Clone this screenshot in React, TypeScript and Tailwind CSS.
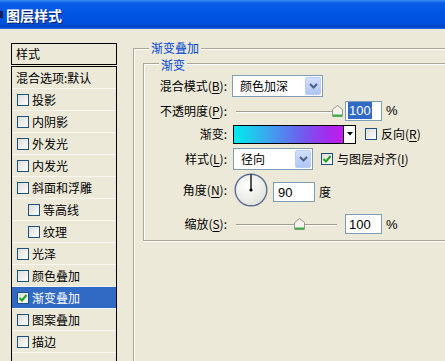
import React from "react";

function Chevron() {
  return (
    <svg width="9" height="6" viewBox="0 0 9 6">
      <path d="M1 1 L4.5 4.5 L8 1" fill="none" stroke="#4D6185" strokeWidth="2" />
    </svg>
  );
}

function Select({ w, text }: { w: string; text: string }) {
  return (
    <div className={`${w} flex h-[22px] items-center border border-[#7F9DB9] bg-white`}>
      <span className="flex-1 pl-[7px] text-[12px] leading-none text-black">{text}</span>
      <span className="mr-[1px] flex h-[18px] w-[16px] items-center justify-center rounded-[2px] border border-[#B9CDF8] bg-linear-to-b from-[#D2DFFD] to-[#B0C5F4]">
        <Chevron />
      </span>
    </div>
  );
}

function Cb({ checked }: { checked?: boolean }) {
  return (
    <span className="relative inline-flex h-[12px] w-[12px] shrink-0 items-center justify-center border border-[#1C5180] bg-linear-to-br from-[#DCDCD7] to-white">
      {checked && (
        <svg width="10" height="10" viewBox="0 0 10 10">
          <path d="M1.5 5 L4 7.5 L8.5 2" fill="none" stroke="#21A121" strokeWidth="2" />
        </svg>
      )}
    </span>
  );
}

function U({ c }: { c: string }) {
  return <span className="underline underline-offset-2">{c}</span>;
}

function Thumb() {
  return (
    <svg width="11" height="12" viewBox="0 0 11 12">
      <path d="M0.5 4.5 L5.5 0.5 L10.5 4.5 V11.5 H0.5Z" fill="#F4F3EE" stroke="#9A9A8A" />
      <rect x="1" y="9.5" width="9" height="2" fill="#38B040" />
    </svg>
  );
}

function Slider({ pos }: { pos: string }) {
  return (
    <div className="relative h-[12px] w-[108px]">
      <div className="absolute left-[3px] top-[6px] h-[2px] w-[101px] border-t border-[#9D9D92] bg-white" />
      <div className={`absolute top-0 ${pos}`}>
        <Thumb />
      </div>
    </div>
  );
}

function Input({ w, h, children }: { w: string; h: string; children: React.ReactNode }) {
  return (
    <div className={`${w} ${h} flex items-center border border-[#7F9DB9] bg-white pl-[2px] font-['Liberation_Sans',sans-serif] text-[13px] leading-none text-black`}>
      {children}
    </div>
  );
}

const items: { t: string; indent?: boolean; sel?: boolean }[] = [
  { t: "投影" },
  { t: "内阴影" },
  { t: "外发光" },
  { t: "内发光" },
  { t: "斜面和浮雕" },
  { t: "等高线", indent: true },
  { t: "纹理", indent: true },
  { t: "光泽" },
  { t: "颜色叠加" },
  { t: "渐变叠加", sel: true },
  { t: "图案叠加" },
  { t: "描边" },
];

function Label({ children }: { children: React.ReactNode }) {
  return <div className="w-[84px] shrink-0 pr-[1px] text-right text-[12px] leading-none text-black">{children}</div>;
}

export default function App() {
  return (
    <div className="h-[361px] w-[445px] overflow-hidden bg-[#ECE9D8] font-['Noto_Sans_CJK_SC','Liberation_Sans',sans-serif] text-black">
      {/* title bar */}
      <div className="flex h-[29px] items-center bg-[linear-gradient(to_bottom,#3D8DF6_0%,#0A5FE8_10%,#0054E3_45%,#0050DC_80%,#0042C4_93%,#2A6FE8_100%)]">
        <span className="h-[7px] w-[3px] bg-[#10205a]" />
        <span className="ml-[3px] text-[14px] font-bold leading-none text-white [text-shadow:1px_1px_0_#0A1E6A]">图层样式</span>
      </div>

      <div className="flex">
        {/* left list */}
        <div className="ml-[11px] mt-[14px] w-[106px] shrink-0">
          <div className="flex h-[22px] items-center border border-black pl-[4px] text-[12px] leading-none">样式</div>
          <div className="mt-[1px] border-x border-t border-black">
            <div className="flex h-[22px] items-center border-b border-[#F8F7F1] pl-[4px] text-[12px] leading-none">混合选项:默认</div>
            {items.map((it) => (
              <div
                key={it.t}
                className={`flex h-[22px] items-center gap-[3px] border-b border-[#F8F7F1] text-[12px] leading-none ${it.indent ? "pl-[16px]" : "pl-[5px]"} ${it.sel ? "bg-[#316AC5] text-white" : ""}`}
              >
                <Cb checked={it.sel} />
                <span>{it.t}</span>
              </div>
            ))}
            <div className="h-[22px] border-b border-[#F8F7F1]" />
          </div>
        </div>

        {/* right */}
        <div className="relative ml-[16px] mt-[19px] h-[400px] w-[340px] shrink-0 border-l border-t border-[#ACA899] shadow-[inset_1px_1px_0_#fff]">
          <span className="absolute -top-[8px] left-[15px] bg-[#ECE9D8] px-[2px] text-[12px] leading-[13px] text-[#0046D5]">渐变叠加</span>

          <div className="relative ml-[9px] mt-[14px] h-[178px] w-[320px] border-l border-t border-b border-[#ACA899] shadow-[inset_1px_1px_0_#fff,0_1px_0_#fff] pt-[11px]">
            <span className="absolute -top-[6px] left-[15px] bg-[#ECE9D8] px-[2px] text-[12px] leading-[13px] text-[#0046D5]">渐变</span>

            {/* row 1 */}
            <div className="flex h-[23px] items-start">
              <div className="flex h-[22px] items-center">
                <Label>
                  混合模式(<U c="B" />):
                </Label>
              </div>
              <div className="ml-[4px]">
                <Select w="w-[91px]" text="颜色加深" />
              </div>
            </div>

            {/* row 2 */}
            <div className="flex h-[25px] items-center">
              <Label>
                不透明度(<U c="P" />):
              </Label>
              <div className="ml-[5px]">
                <Slider pos="left-[99px]" />
              </div>
              <div className="ml-[4px]">
                <Input w="w-[37px]" h="h-[20px]">
                  <span className="bg-[#316AC5] px-[1px] py-[2px] text-white">100</span>
                </Input>
              </div>
              <span className="ml-[4px] font-['Liberation_Sans',sans-serif] text-[13px] leading-none">%</span>
            </div>

            {/* row 3 */}
            <div className="flex h-[22px] items-center">
              <Label>渐变:</Label>
              <div className="ml-[5px] flex h-[19px] border border-black">
                <div className="h-full w-[109px] bg-[linear-gradient(to_right,#00ECEC_0%,#3BA8EE_30%,#6B62EE_60%,#A32CEE_85%,#C21CEC_100%)]" />
                <div className="flex h-full w-[12px] items-center justify-center border-l border-black bg-white">
                  <svg width="6" height="4" viewBox="0 0 6 4">
                    <path d="M0 0 H6 L3 3.5Z" fill="#000" />
                  </svg>
                </div>
              </div>
              <div className="ml-[9px] flex items-center gap-[4px] text-[12px] leading-none">
                <Cb />
                <span>
                  反向(<U c="R" />)
                </span>
              </div>
            </div>

            {/* row 4 */}
            <div className="flex h-[28px] items-center">
              <Label>
                样式(<U c="L" />):
              </Label>
              <div className="ml-[5px]">
                <Select w="w-[80px]" text="径向" />
              </div>
              <div className="ml-[8px] flex items-center gap-[4px] text-[12px] leading-none">
                <Cb checked />
                <span>
                  与图层对齐(<U c="I" />)
                </span>
              </div>
            </div>

            {/* row 5 */}
            <div className="flex h-[34px] items-center">
              <Label>
                角度(<U c="N" />):
              </Label>
              <div className="ml-[6px]">
                <svg width="34" height="34" viewBox="0 0 34 34">
                  <defs>
                    <radialGradient id="dialg" cx="40%" cy="35%" r="70%">
                      <stop offset="0%" stopColor="#FFFFFF" />
                      <stop offset="100%" stopColor="#E2E2DC" />
                    </radialGradient>
                  </defs>
                  <circle cx="17" cy="17" r="15.8" fill="url(#dialg)" stroke="#5A6E94" strokeWidth="1.4" />
                  <line x1="17" y1="17" x2="17" y2="1.5" stroke="#000" strokeWidth="1.3" />
                  <circle cx="17" cy="17" r="1.6" fill="#000" />
                </svg>
              </div>
              <div className="ml-[5px] mt-[4px]">
                <Input w="w-[42px]" h="h-[20px]">
                  <span className="pl-[2px]">90</span>
                </Input>
              </div>
              <span className="ml-[4px] mt-[4px] text-[12px] leading-none">度</span>
            </div>

            {/* row 6 */}
            <div className="mt-[5px] flex h-[24px] items-center">
              <Label>
                缩放(<U c="S" />):
              </Label>
              <div className="ml-[5px]">
                <Slider pos="left-[61px]" />
              </div>
              <div className="ml-[4px]">
                <Input w="w-[37px]" h="h-[20px]">
                  <span className="pl-[1px]">100</span>
                </Input>
              </div>
              <span className="ml-[4px] font-['Liberation_Sans',sans-serif] text-[13px] leading-none">%</span>
            </div>
          </div>
        </div>
      </div>
    </div>
  );
}
